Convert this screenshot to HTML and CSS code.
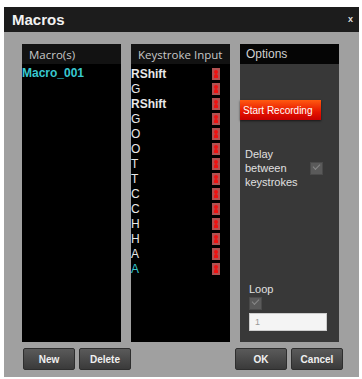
FILE: index.html
```html
<!DOCTYPE html>
<html lang="en">
<head>
    <meta charset="UTF-8">
    <title>Macros</title>
    <link rel="stylesheet" href="styles.css">
</head>
<body>
    <div class="dialog">
        <div class="titlebar">
            <span class="title">Macros</span>
            <span class="close">x</span>
        </div>
        <div class="content">
            <div class="panels">
                <div class="panel">
                    <div class="panel-head">Macro(s)</div>
                    <div class="panel-body">
                        <div class="macro selected">Macro_001</div>
                    </div>
                </div>
                <div class="panel">
                    <div class="panel-head">Keystroke Input</div>
                    <div class="panel-body keys">
                        <div class="key bold">RShift<i class="del"></i></div>
                        <div class="key">G<i class="del"></i></div>
                        <div class="key bold">RShift<i class="del"></i></div>
                        <div class="key">G<i class="del"></i></div>
                        <div class="key">O<i class="del"></i></div>
                        <div class="key">O<i class="del"></i></div>
                        <div class="key">T<i class="del"></i></div>
                        <div class="key">T<i class="del"></i></div>
                        <div class="key">C<i class="del"></i></div>
                        <div class="key">C<i class="del"></i></div>
                        <div class="key">H<i class="del"></i></div>
                        <div class="key">H<i class="del"></i></div>
                        <div class="key">A<i class="del"></i></div>
                        <div class="key selected">A<i class="del"></i></div>
                    </div>
                </div>
                <div class="panel options">
                    <div class="panel-head">Options</div>
                    <div class="panel-body">
                        <button class="record">Start Recording</button>
                        <div class="delay">
                            <span>Delay<br>between<br>keystrokes</span>
                            <span class="check"></span>
                        </div>
                        <div class="loop">
                            <span>Loop</span>
                            <span class="check"></span>
                            <input class="count" type="text" value="1">
                        </div>
                    </div>
                </div>
            </div>
            <div class="buttons">
                <button class="btn">New</button>
                <button class="btn">Delete</button>
                <span class="spacer"></span>
                <button class="btn">OK</button>
                <button class="btn">Cancel</button>
            </div>
        </div>
    </div>
</body>
</html>
```

FILE: styles.css
```css
body {
    margin: 0;
    background: #fff;
    font-family: "Liberation Sans", Arial, sans-serif;
}
.dialog {
    width: 355px;
    height: 370px;
    margin: 7px 0 0 4px;
    display: flex;
    flex-direction: column;
    background: #a0a0a0;
}
.titlebar {
    height: 25px;
    background: #1c1c1c;
    display: flex;
    align-items: center;
    justify-content: space-between;
    padding: 0 6px 0 8px;
}
.title {
    color: #f2f2f2;
    font-weight: bold;
    font-size: 15px;
}
.close {
    color: #ddd;
    font-size: 9px;
    font-weight: bold;
    margin-top: -2px;
}
.content {
    flex: 1;
    padding: 12px 16px 0 18px;
    display: flex;
    flex-direction: column;
}
.panels {
    display: flex;
    gap: 10px;
    height: 298px;
}
.panel {
    width: 99px;
    background: #000;
    display: flex;
    flex-direction: column;
}
.panel-head {
    height: 20px;
    line-height: 21px;
    background: #121212;
    color: #c8c8c8;
    font-family: "Open Sans", sans-serif;
    font-size: 11.5px;
    padding-left: 7px;
}
.panel-body {
    flex: 1;
}
.macro {
    font-weight: bold;
    font-size: 12px;
    padding-top: 2px;
}
.selected {
    color: #38c8d0;
}
.keys {
    padding-top: 2px;
}
.key {
    height: 15px;
    line-height: 14px;
    display: flex;
    justify-content: space-between;
    align-items: center;
    color: #e8e8e8;
    font-family: "Liberation Sans", sans-serif;
    font-size: 12px;
    padding-right: 10px;
}
.key.bold {
    font-weight: bold;
}
.key.selected {
    color: #38c8d0;
}
.del {
    width: 8px;
    height: 12px;
    background: #b05050;
    position: relative;
}
.del::before {
    content: '';
    position: absolute;
    left: 2px;
    top: 2px;
    width: 4px;
    height: 4px;
    border-radius: 50%;
    background: #f01010;
}
.del::after {
    content: '';
    position: absolute;
    left: 2px;
    top: 6px;
    width: 4px;
    height: 4px;
    border-radius: 2px 2px 0 0;
    background: #f01010;
}
.options .panel-head {
    background: #050505;
    color: #d0d0d0;
    font-family: "Liberation Sans", sans-serif;
    font-size: 12px;
    padding-left: 6px;
}
.options .panel-body {
    background: #383838;
    display: flex;
    flex-direction: column;
    color: #e0e0e0;
    font-size: 11px;
}
.record {
    margin-top: 36px;
    width: 81px;
    height: 20px;
    border: none;
    padding: 0 0 0 3px;
    text-align: left;
    background: linear-gradient(#ff5a10, #e51400 60%, #c80000);
    color: #fff;
    font-family: "Liberation Sans", sans-serif;
    font-size: 10px;
    box-shadow: 0 1px 2px rgba(0, 0, 0, .6);
}
.delay {
    margin-top: 27px;
    padding-left: 5px;
    display: flex;
    align-items: center;
    gap: 12px;
    line-height: 14px;
}
.check {
    display: block;
    width: 11px;
    height: 11px;
    background: #5a5a5a;
    border: 1px solid #4a4a4a;
    position: relative;
}
.check::after {
    content: '';
    position: absolute;
    left: 2px;
    top: 1px;
    width: 6px;
    height: 3px;
    border-left: 1px solid #888;
    border-bottom: 1px solid #888;
    transform: rotate(-45deg);
}
.loop {
    margin-top: auto;
    padding: 0 0 11px 9px;
    display: flex;
    flex-direction: column;
    gap: 2px;
}
.count {
    margin-top: 1px;
    width: 78px;
    height: 18px;
    box-sizing: border-box;
    border: 1px solid #ccc;
    background: #f4f4f4;
    color: #999;
    font-size: 9px;
    padding: 0 5px;
}
.buttons {
    display: flex;
    gap: 4px;
    margin-top: 6px;
    padding-left: 1px;
}
.spacer {
    flex: 1;
}
.btn {
    width: 52px;
    height: 22px;
    border: 1px solid #2e2e2e;
    border-radius: 2px;
    background: linear-gradient(#5a5a5a, #3a3a3a);
    color: #f0f0f0;
    font-family: "Liberation Sans", sans-serif;
    font-weight: bold;
    font-size: 10px;
    padding: 0;
}
```
